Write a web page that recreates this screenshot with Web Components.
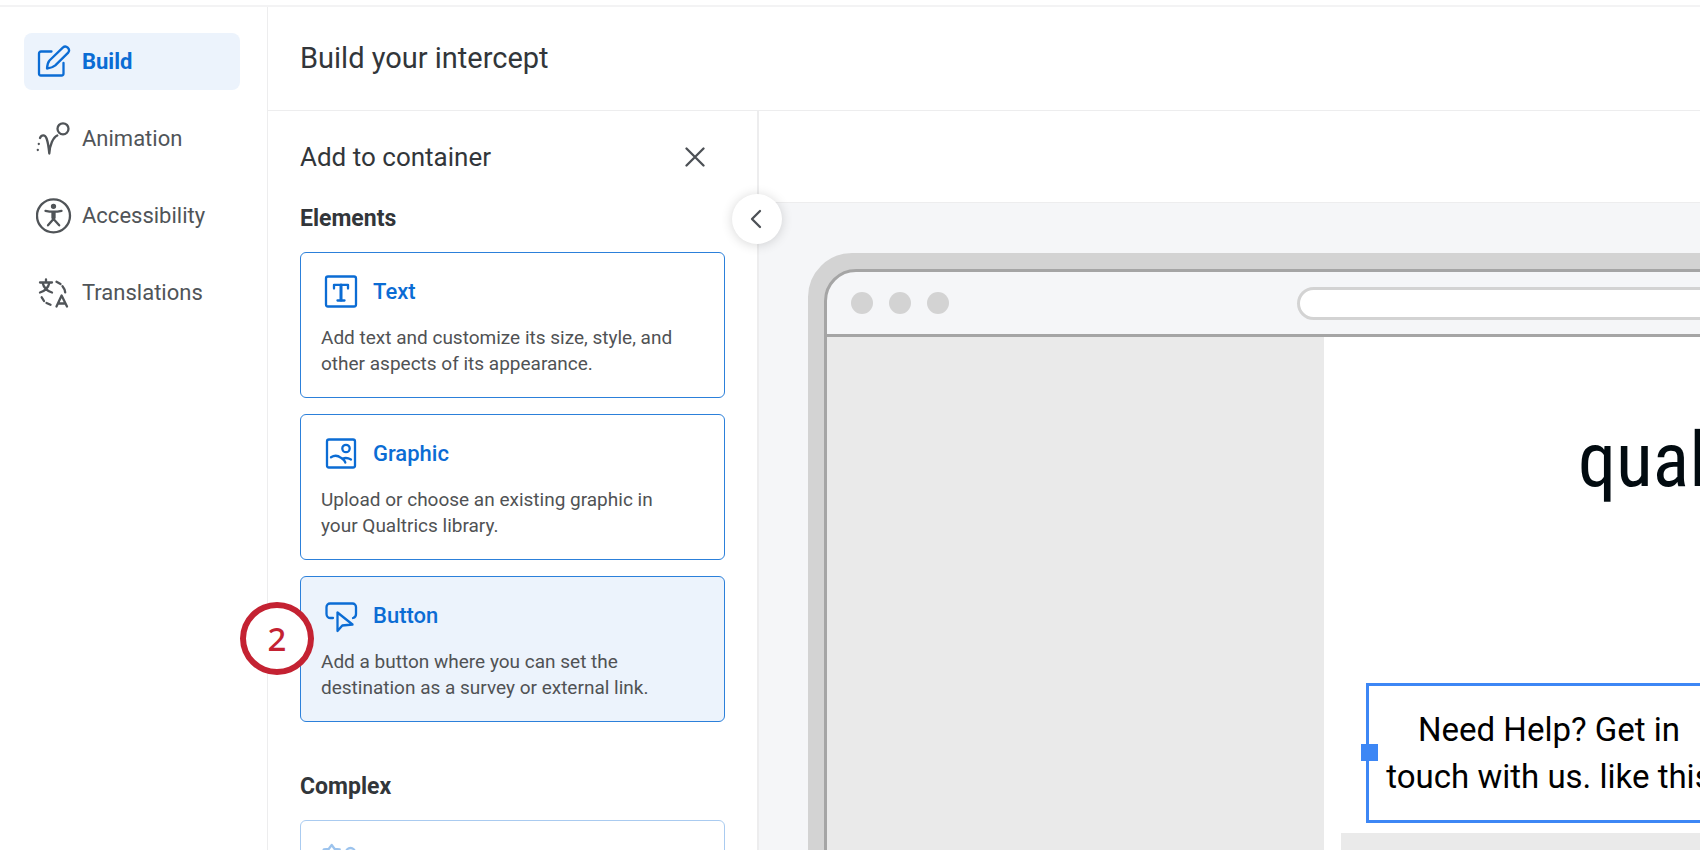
<!DOCTYPE html>
<html lang="en">
<head>
<meta charset="utf-8">
<title>Build your intercept</title>
<style>
    body{
        margin: 0;
        font-family: Roboto, "Liberation Sans", sans-serif;
        color: #32363a;
        background: #fff;
        --blue: #0b6cd4;
        --light-blue: #ecf3fc;
        --line: #ededee;
    }
</style>
</head>
<body>
<intercept-builder></intercept-builder>
<script>
const icons = {
    build: `<path d="M15.500 7.500H5a2 2 0 0 0-2 2V29.500a2 2 0 0 0 2 2H25.500a2 2 0 0 0 2-2V19"/>
        <path d="M11 24.500C11.200 21.500 11.800 18.500 13.500 16.500L26.800 3.600a3.700 3.700 0 0 1 5.400 5L19.300 21.400C17 23.300 14 24.200 11 24.500Z"/>`,
    animation: `<circle cx="27" cy="7.800" r="5.500"/>
        <path d="M4 17C5.500 13.600 9 13.300 10.600 17.500C12 21.500 12.800 27 13.300 32.500C13.800 24 17 16.500 21.300 14.500"/>
        <path d="M2.800 22.800v.2M1.800 28.800v.2"/>`,
    accessibility: `<circle cx="17.500" cy="17.800" r="16.500"/>
        <circle cx="17.500" cy="8.300" r="1.500" fill="currentColor"/>
        <path d="M9.500 12.800C14 13.800 21 13.800 25.500 12.800M16.500 13.800V20M18.500 13.800V20M17.500 19.500V21L12 27.300M17.500 21L23.200 27.300"/>`,
    translations: `<path d="M4 7.500H16M10 4.500V7.500M6.500 7.500C7.500 12 11 16 16 17.500M13.500 7.500C12.500 12 9 16 4 17.500"/>
        <path d="M20.500 31.500L25.600 20.500L31 31.500M22 28.500H29.500"/>
        <path d="M20.500 6.800L24.500 9M26.500 11.200C28 13 29 15 29.200 17.300M5.700 22.300L8 26M10.500 28L14.500 29.800"/>`,
    text: `<rect x="5" y="3.500" width="30" height="30" rx="2"/>
        <path d="M13 15.500V11.800H27V15.500M16.500 27.500H23.500"/><path stroke-width="3" d="M20 12V27"/>`,
    graphic: `<rect x="6" y="4.500" width="28" height="28" rx="2"/>
        <circle cx="25" cy="13.500" r="3.700"/>
        <path d="M10 22.300C13 20.300 17 20.500 20 22.800C22.500 24.500 24 26 24.300 27.500M21.500 23.800C24 22.600 27 22.800 30 24.500"/>`,
    button: `<path d="M12 21H9.500a4 4 0 0 1-4-4V10a3.500 3.500 0 0 1 3.500-3.500H31.500a3.500 3.500 0 0 1 3.500 3.500V17a4 4 0 0 1-3 4"/>
        <path d="M16.500 15.500V34L21.300 28.500L31.500 27.500Z"/>`,
    complex: `<path d="M10.700 4l3 4 5 .5-2 5 2 5-5 .5-3 4-3-4-5-.5 2-5-2-5 5-.5z"/><circle cx="29.500" cy="11.500" r="4.500"/>`,
    close: `<path d="M1.500 1.500L18.500 18.500M18.500 1.500L1.500 18.500"/>`,
    chevron: `<path d="M13 2L5 10L13 18"/>`
}
const icon = (name, w, h) => `<svg width="${w}" height="${h}" viewBox="0 0 ${w} ${h}" fill="none" stroke="currentColor" stroke-width="2.300" stroke-linecap="round" stroke-linejoin="round" aria-hidden="true">${icons[name]}</svg>`

class NavItem extends HTMLElement{
    constructor(){
        super()
        this._shadowRoot = this.attachShadow({mode: 'open'})
    }
    connectedCallback(){
        this._shadowRoot.innerHTML = `
            <style>
                :host{ display: block; color: #505458 }
                :host([active]){ color: var(--blue); font-weight: 700 }
                a{
                    display: flex;
                    align-items: center;
                    gap: 10px;
                    height: 57px;
                    padding: 0 12px;
                    border-radius: 8px;
                    font-size: 22px;
                    color: inherit;
                    text-decoration: none;
                }
                :host([active]) a{ background: var(--light-blue) }
                svg{ flex: none }
            </style>
            <a href="#${this.getAttribute('icon')}">${icon(this.getAttribute('icon'), 36, 36)}<slot></slot></a>
        `
    }
}
window.customElements.define('nav-item', NavItem)

class ElementCard extends HTMLElement{
    constructor(){
        super()
        this._shadowRoot = this.attachShadow({mode: 'open'})
    }
    connectedCallback(){
        this._shadowRoot.innerHTML = `
            <style>
                :host{ display: block; position: relative }
                :host([disabled]){ opacity: .4 }
                button{
                    display: block;
                    box-sizing: border-box;
                    width: 100%;
                    padding: 20px;
                    border: 1px solid #2c80da;
                    border-radius: 6px;
                    background: #fff;
                    font-family: inherit;
                    text-align: left;
                }
                :host([selected]) button{ background: var(--light-blue) }
                .title{
                    display: flex;
                    align-items: center;
                    gap: 12px;
                    height: 36px;
                    margin-bottom: 16px;
                    font-size: 22px;
                    font-weight: 500;
                    color: var(--blue);
                }
                .text{
                    display: block;
                    min-height: 52px;
                    font-size: 19px;
                    line-height: 26px;
                    color: #505254;
                }
            </style>
            <button type="button">
                <span class="title">${icon(this.getAttribute('icon'), 40, 36)}<slot name="title"></slot></span>
                <span class="text"><slot></slot></span>
            </button>
            <slot name="marker"></slot>
        `
    }
}
window.customElements.define('element-card', ElementCard)

class StepMarker extends HTMLElement{
    constructor(){
        super()
        this._shadowRoot = this.attachShadow({mode: 'open'})
    }
    connectedCallback(){
        this._shadowRoot.innerHTML = `
            <style>
                :host{
                    position: absolute;
                    left: -60px;
                    top: 26px;
                    box-sizing: border-box;
                    width: 74px;
                    height: 73px;
                    display: flex;
                    align-items: center;
                    justify-content: center;
                    border: 6px solid #c42232;
                    border-radius: 50%;
                    background: #fff;
                    color: #c42232;
                    font: 500 33px "Noto Sans", sans-serif;
                }
            </style>
            <slot></slot>
        `
    }
}
window.customElements.define('step-marker', StepMarker)

class ElementPanel extends HTMLElement{
    constructor(){
        super()
        this._shadowRoot = this.attachShadow({mode: 'open'})
    }
    connectedCallback(){
        this._shadowRoot.innerHTML = `
            <style>
                :host{
                    display: block;
                    position: relative;
                    box-sizing: border-box;
                    flex: none;
                    width: 491px;
                    padding: 26px 32px 0;
                    border-right: 2px solid var(--line);
                    z-index: 1;
                }
                .head{
                    display: flex;
                    align-items: center;
                    justify-content: space-between;
                    height: 40px;
                }
                h2{ margin: 0; font-size: 26px; font-weight: 400 }
                h3{
                    margin: 28px 0 19px;
                    font-size: 23px;
                    line-height: 28px;
                    font-weight: 700;
                }
                .cards{ display: flex; flex-direction: column; gap: 16px }
                .cards + h3{ margin-top: 51px }
                button{
                    display: flex;
                    align-items: center;
                    justify-content: center;
                    width: 40px;
                    height: 40px;
                    margin-right: 10px;
                    padding: 0;
                    border: 0;
                    background: #fff;
                    color: #4c5055;
                }
                .collapse{
                    position: absolute;
                    right: -25px;
                    top: 83px;
                    width: 50px;
                    height: 50px;
                    margin: 0;
                    border-radius: 50%;
                    box-shadow: 0 1px 12px rgba(0, 0, 0, .16);
                }
            </style>
            <div class="head">
                <h2>Add to container</h2>
                <button type="button" aria-label="Close">${icon('close', 20, 20)}</button>
            </div>
            <h3>Elements</h3>
            <div class="cards">
                <element-card icon="text">
                    <span slot="title">Text</span>
                    Add text and customize its size, style, and<br>other aspects of its appearance.
                </element-card>
                <element-card icon="graphic">
                    <span slot="title">Graphic</span>
                    Upload or choose an existing graphic in<br>your Qualtrics library.
                </element-card>
                <element-card icon="button" selected>
                    <span slot="title">Button</span>
                    Add a button where you can set the<br>destination as a survey or external link.
                    <step-marker slot="marker">2</step-marker>
                </element-card>
            </div>
            <h3>Complex</h3>
            <div class="cards">
                <element-card icon="complex" disabled></element-card>
            </div>
            <button class="collapse" type="button" aria-label="Collapse panel">${icon('chevron', 20, 20)}</button>
        `
    }
}
window.customElements.define('element-panel', ElementPanel)

class DevicePreview extends HTMLElement{
    constructor(){
        super()
        this._shadowRoot = this.attachShadow({mode: 'open'})
    }
    connectedCallback(){
        this._shadowRoot.innerHTML = `
            <style>
                :host{
                    display: flex;
                    flex-direction: column;
                    flex: 1;
                    min-width: 0;
                    overflow: hidden;
                }
                .tools{ flex: none; height: 91px; border-bottom: 1px solid var(--line) }
                .stage{ flex: 1; padding: 50px 49px; background: #f5f6f8 }
                .device{
                    width: 1450px;
                    height: 900px;
                    border: 16px solid #d3d3d3;
                    border-radius: 44px;
                    background: #d3d3d3;
                }
                .screen{
                    display: flex;
                    flex-direction: column;
                    box-sizing: border-box;
                    height: 100%;
                    border: 3px solid #a5a5a5;
                    border-radius: 32px;
                    background: #f5f6f8;
                    overflow: hidden;
                }
                .bar{
                    display: grid;
                    grid-template-columns: 1fr 504px 1fr;
                    align-items: center;
                    height: 62px;
                    border-bottom: 3px solid #a5a5a5;
                }
                .dots{ display: flex; gap: 16px; padding-left: 24px }
                .dots i{ width: 22px; height: 22px; border-radius: 50%; background: #d3d3d3 }
                .url{
                    box-sizing: border-box;
                    height: 33px;
                    border: 3px solid #d3d3d3;
                    border-radius: 17px;
                    background: #fff;
                }
                .page{
                    display: flex;
                    justify-content: center;
                    flex: 1;
                    background: #eaeaea;
                }
                .popup{
                    box-sizing: border-box;
                    width: 450px;
                    padding: 0 17px;
                    background: #fff;
                }
                .logo{
                    height: 346px;
                    padding: 81px 0 0 237px;
                    box-sizing: border-box;
                    font: 76px/84px "Roboto Condensed", "Liberation Sans Narrow", "Liberation Sans", sans-serif;
                    color: #020b10;
                }
                .message{
                    position: relative;
                    margin: 0 25px 10px;
                    padding: 20px 0;
                    border: 3px solid #3d87f5;
                    font-size: 33px;
                    line-height: 47px;
                    text-align: center;
                    white-space: nowrap;
                    color: #000;
                }
                .message p{ margin: 0 }
                .handle{
                    position: absolute;
                    left: -8px;
                    top: 58px;
                    width: 17px;
                    height: 17px;
                    background: #3d87f5;
                }
                .slot{ height: 200px; background: #eaeaea }
            </style>
            <div class="tools"></div>
            <div class="stage">
                <div class="device">
                    <div class="screen">
                        <div class="bar">
                            <div class="dots"><i></i><i></i><i></i></div>
                            <div class="url"></div>
                        </div>
                        <div class="page">
                            <div class="popup">
                                <div class="logo">qual</div>
                                <div class="message">
                                    <p>Need Help? Get in<br>touch with us. like this</p>
                                    <span class="handle"></span>
                                </div>
                                <div class="slot"></div>
                            </div>
                        </div>
                    </div>
                </div>
            </div>
        `
    }
}
window.customElements.define('device-preview', DevicePreview)

class InterceptBuilder extends HTMLElement{
    constructor(){
        super()
        this._shadowRoot = this.attachShadow({mode: 'open'})
    }
    connectedCallback(){
        this._shadowRoot.innerHTML = `
            <style>
                :host{
                    display: flex;
                    flex-direction: column;
                    height: 100vh;
                    overflow: hidden;
                }
                .top{ flex: none; height: 5px; border-bottom: 2px solid #f3f3f4 }
                .body{ display: flex; flex: 1; min-height: 0 }
                nav{
                    display: flex;
                    flex-direction: column;
                    gap: 20px;
                    flex: none;
                    box-sizing: border-box;
                    width: 268px;
                    padding: 26px 27px 0 24px;
                    border-right: 1px solid var(--line);
                }
                main{ display: flex; flex-direction: column; flex: 1; min-width: 0 }
                header{
                    display: flex;
                    align-items: center;
                    flex: none;
                    height: 101px;
                    padding: 0 32px 2px;
                    border-bottom: 1px solid var(--line);
                }
                h1{ margin: 0; font-size: 29px; font-weight: 400 }
                .work{ display: flex; flex: 1; min-height: 0 }
            </style>
            <div class="top"></div>
            <div class="body">
                <nav>
                    <nav-item icon="build" active>Build</nav-item>
                    <nav-item icon="animation">Animation</nav-item>
                    <nav-item icon="accessibility">Accessibility</nav-item>
                    <nav-item icon="translations">Translations</nav-item>
                </nav>
                <main>
                    <header><h1>Build your intercept</h1></header>
                    <div class="work">
                        <element-panel></element-panel>
                        <device-preview></device-preview>
                    </div>
                </main>
            </div>
        `
    }
}
window.customElements.define('intercept-builder', InterceptBuilder)
</script>
</body>
</html>
